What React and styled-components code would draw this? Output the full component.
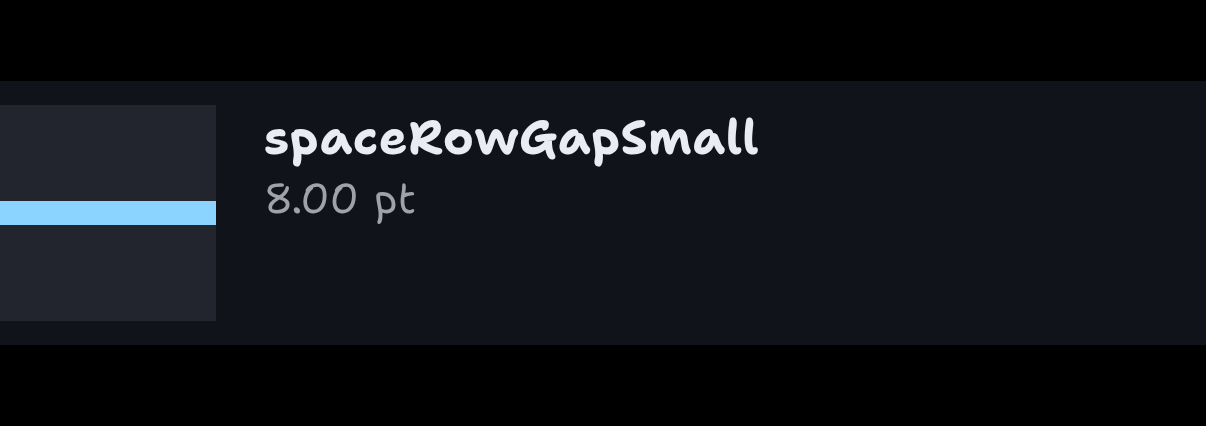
import React from "react";
import styled, { createGlobalStyle } from "styled-components";

const GlobalStyle = createGlobalStyle`
  *, *::before, *::after { box-sizing: border-box; }
  body { margin: 0; background: #000000; }
`;

const Screen = styled.main`
  display: flex;
  flex-direction: column;
  justify-content: center;
  height: 426px;
  overflow: hidden;
  background: #000000;
`;

const TokenRow = styled.section`
  display: flex;
  align-items: flex-start;
  gap: 48px;
  height: 264px;
  padding: 24px 0;
  background: #10131a;
`;

const Preview = styled.div`
  display: flex;
  align-items: center;
  width: 216px;
  height: 216px;
  background: #22252d;
`;

const GapBar = styled.div`
  width: 100%;
  height: 24px;
  background: #8ad4ff;
`;

const Details = styled.div`
  display: flex;
  flex-direction: column;
  font-family: "Shantell Sans", Lato, sans-serif;
  white-space: nowrap;
  text-rendering: geometricPrecision;
  will-change: transform;
`;

const Name = styled.h1`
  margin: 0;
  padding-top: 3px;
  font-size: 48px;
  line-height: 60px;
  font-weight: 700;
  letter-spacing: 0.57px;
  color: #e9ecf2;
`;

const Value = styled.p`
  margin: 0;
  padding-top: 1px;
  font-size: 42px;
  line-height: 60px;
  font-weight: 400;
  letter-spacing: 0.3px;
  color: #9fa2aa;
`;

export default function App() {
  return (
    <>
      <GlobalStyle />
      <Screen>
        <TokenRow>
          <Preview>
            <GapBar />
          </Preview>
          <Details>
            <Name>spaceRowGapSmall</Name>
            <Value>8.00 pt</Value>
          </Details>
        </TokenRow>
      </Screen>
    </>
  );
}
